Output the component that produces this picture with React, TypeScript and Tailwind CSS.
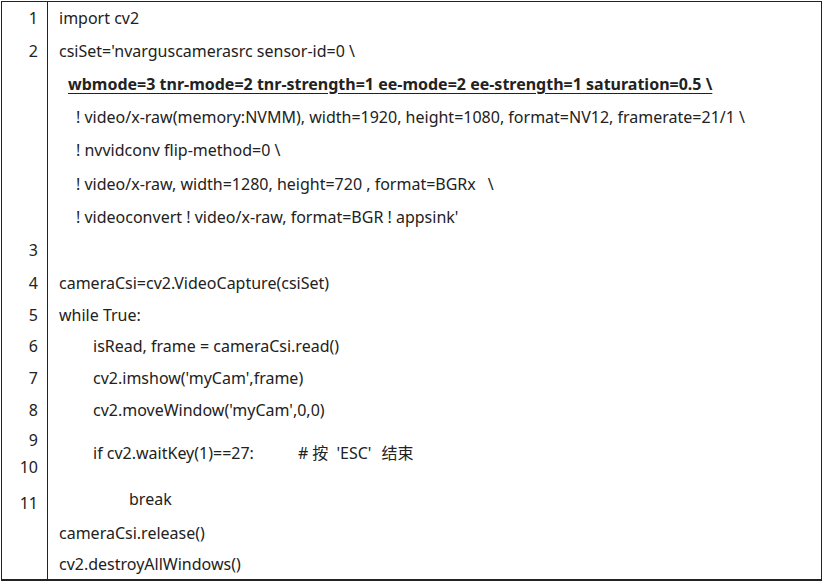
import React from 'react';

type Row = {
  num?: React.ReactNode;
  h: string;
  indent: string;
  text: React.ReactNode;
  numClass?: string;
};

const rows: Row[] = [
  { num: '1', h: 'h-[32px]', indent: 'pl-[11px]', text: 'import cv2' },
  { num: '2', h: 'h-[33px]', indent: 'pl-[11px]', text: "csiSet='nvarguscamerasrc sensor-id=0 \\" },
  {
    h: 'h-[33px]',
    indent: 'pl-[20px]',
    text: (
      <span className="font-bold underline underline-offset-[3px]">
        wbmode=3 tnr-mode=2 tnr-strength=1 ee-mode=2 ee-strength=1 saturation=0.5 \
      </span>
    ),
  },
  {
    h: 'h-[33px]',
    indent: 'pl-[28px]',
    text: '! video/x-raw(memory:NVMM), width=1920, height=1080, format=NV12, framerate=21/1 \\',
  },
  { h: 'h-[34px]', indent: 'pl-[28px]', text: '! nvvidconv flip-method=0 \\' },
  {
    h: 'h-[33px]',
    indent: 'pl-[28px]',
    text: (
      <>
        ! video/x-raw, width=1280, height=720 , format=BGRx<span className="inline-block w-[12px]" />\
      </>
    ),
  },
  { h: 'h-[33px]', indent: 'pl-[28px]', text: "! videoconvert ! video/x-raw, format=BGR ! appsink'" },
  { num: '3', h: 'h-[33px]', indent: 'pl-[11px]', text: '' },
  { num: '4', h: 'h-[33px]', indent: 'pl-[11px]', text: 'cameraCsi=cv2.VideoCapture(csiSet)' },
  { num: '5', h: 'h-[31px]', indent: 'pl-[11px]', text: 'while True:' },
  { num: '6', h: 'h-[31px]', indent: 'pl-[45px]', text: 'isRead, frame = cameraCsi.read()' },
  { num: '7', h: 'h-[33px]', indent: 'pl-[45px]', text: "cv2.imshow('myCam',frame)" },
  { num: '8', h: 'h-[32px]', indent: 'pl-[45px]', text: "cv2.moveWindow('myCam',0,0)" },
];

const tail: Row[] = [
  { num: '11', h: 'h-[37px]', indent: 'pl-[81px]', text: 'break', numClass: 'pt-[8px]' },
  { h: 'h-[32px]', indent: 'pl-[11px]', text: 'cameraCsi.release()' },
  { h: 'h-[30px]', indent: 'pl-[11px]', text: 'cv2.destroyAllWindows()' },
];

const NumCell = ({ children, className = '' }: { children?: React.ReactNode; className?: string }) => (
  <div className={`w-[46px] shrink-0 border-r border-[#222] flex items-center justify-end pr-[9px] ${className}`}>
    {children}
  </div>
);

const CodeRow = ({ row }: { row: Row }) => (
  <div className={`flex ${row.h}`}>
    <NumCell className={row.numClass}>{row.num}</NumCell>
    <div className={`flex-1 flex items-center whitespace-pre ${row.indent}`}>{row.text}</div>
  </div>
);

export default function App() {
  return (
    <div className="w-[823px] h-[582px] bg-white pt-[1px] pl-[1px]">
      <div
        className="w-[821px] h-[580px] border-t border-l border-r border-b-2 border-[#222] text-[16px] text-[#222] leading-none flex flex-col"
        style={{ fontFamily: '"Noto Sans", "Noto Sans CJK SC", sans-serif' }}
      >
        {rows.map((r, i) => (
          <CodeRow key={i} row={r} />
        ))}

        {/* 9 and 10 share one code line */}
        <div className="flex h-[54px]">
          <div className="w-[46px] shrink-0 border-r border-[#222] flex flex-col pr-[9px]">
            <div className="h-[28px] flex items-center justify-end">9</div>
            <div className="h-[26px] flex items-center justify-end">10</div>
          </div>
          <div className="flex-1 flex items-center whitespace-pre pl-[45px]">
            if cv2.waitKey(1)==27:<span className="inline-block w-[44px]" />#
            <span className="inline-block w-[4px]" />按<span className="inline-block w-[4px]" /> 'ESC'
            <span className="inline-block w-[10px]" />结束
          </div>
        </div>

        {tail.map((r, i) => (
          <CodeRow key={i} row={r} />
        ))}
      </div>
    </div>
  );
}
